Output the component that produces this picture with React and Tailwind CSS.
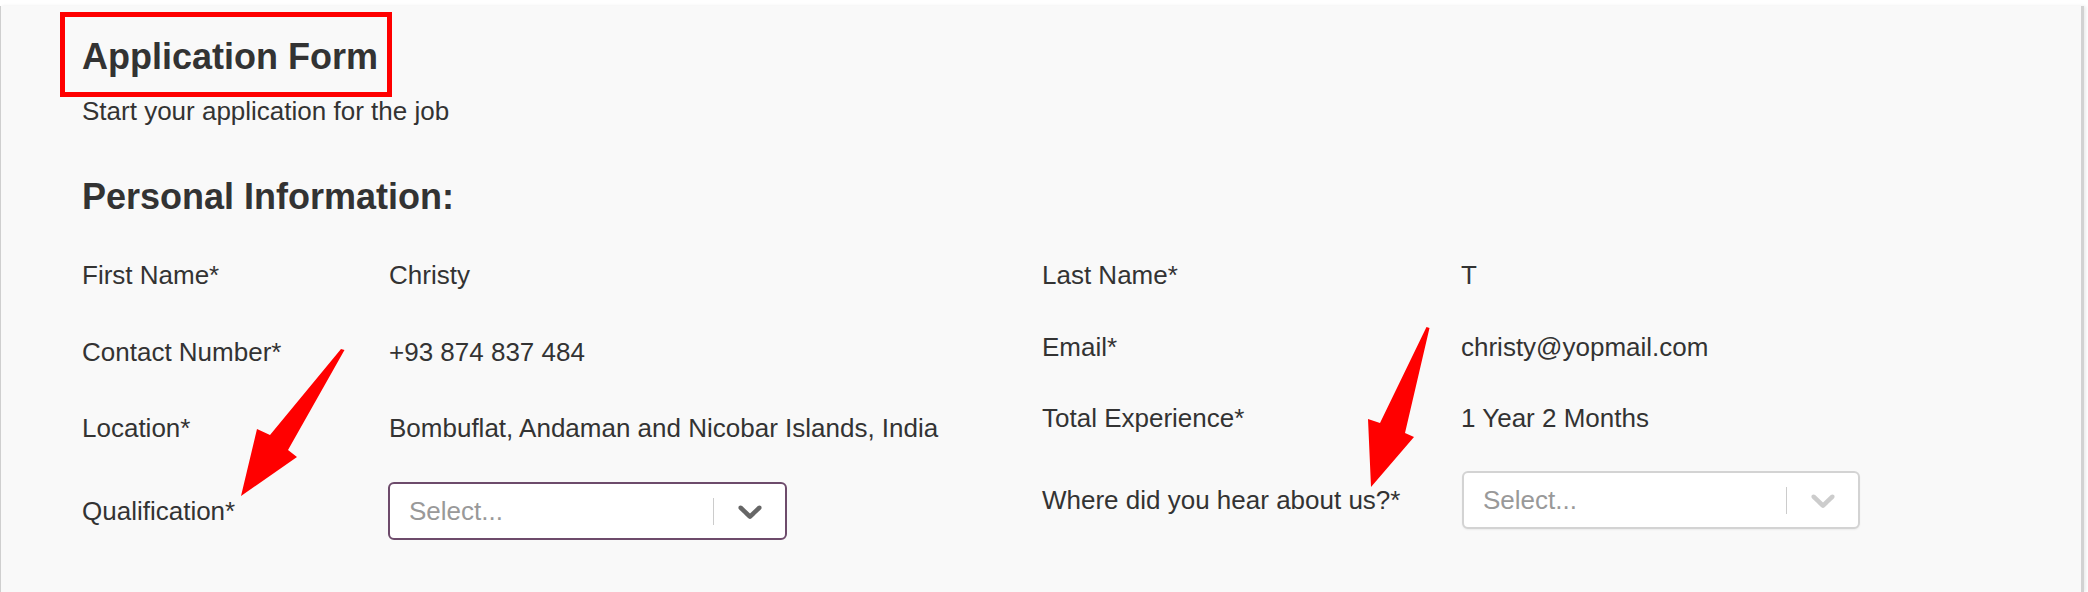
import React from 'react';

const LEFT_ROWS = [
  { label: 'First Name*', value: 'Christy', mt: 'mt-0' },
  { label: 'Contact Number*', value: '+93 874 837 484', mt: 'mt-[47px]' },
  { label: 'Location*', value: 'Bombuflat, Andaman and Nicobar Islands, India', mt: 'mt-[46px]' },
];

const RIGHT_ROWS = [
  { label: 'Last Name*', value: 'T', mt: 'mt-0' },
  { label: 'Email*', value: 'christy@yopmail.com', mt: 'mt-[42px]' },
  { label: 'Total Experience*', value: '1 Year 2 Months', mt: 'mt-[41px]' },
];

/**
 * react-select style dropdown (placeholder only)
 */
function SelectBox({ focused, width }) {
  return (
    <div
      className={`flex h-[58px] items-center rounded-[6px] border-2 bg-white ${width} ${
        focused ? 'border-[#6d4b6b]' : 'border-[#d3d3d3] shadow-[0_1px_2px_rgba(0,0,0,0.06)]'
      }`}
    >
      <div className="flex-1 pl-[19px] text-[26px] leading-[30px] text-[#999]">Select...</div>
      <span className="h-[27px] w-px bg-[#cccccc]" />
      <div className="pl-[16px] pr-[15px]">
        <svg
          width="40"
          height="40"
          viewBox="0 0 20 20"
          className={focused ? 'fill-[#666]' : 'fill-[#cccccc]'}
        >
          <path d="M4.516 7.548c0.436-0.446 1.043-0.481 1.576 0l3.908 3.747 3.908-3.747c0.533-0.481 1.141-0.446 1.574 0 0.436 0.445 0.408 1.197 0 1.615-0.406 0.418-4.695 4.502-4.695 4.502-0.217 0.223-0.502 0.335-0.787 0.335s-0.57-0.112-0.789-0.335c0 0-4.287-4.084-4.695-4.502s-0.436-1.17 0-1.615z" />
        </svg>
      </div>
    </div>
  );
}

function InfoRow({ label, value, mt, labelWidth }) {
  return (
    <div className={`flex h-[30px] items-center ${mt}`}>
      <div className={`${labelWidth} shrink-0`}>{label}</div>
      <div>{value}</div>
    </div>
  );
}

export default function App() {
  return (
    <div className="relative h-[592px] w-[2088px] overflow-hidden bg-white pr-[4px] pt-[6px] font-['Liberation_Sans',Arial,sans-serif] text-[#333]">
      <div className="h-full border-l border-[#cfcfcf] border-r-[3px] border-r-[#d2d2d2] bg-[#f9f9f9] pl-[81px] pt-[30px] shadow-[2px_0_3px_rgba(0,0,0,0.08)]">
        {/* Header */}
        <div className="relative">
          <h1 className="text-[36px] font-bold leading-[42px]">Application Form</h1>
          <div className="absolute -left-[22px] -top-[24px] h-[85px] w-[332px] border-[5px] border-[#ff0000]" />
        </div>
        <p className="mt-[18px] text-[26px] leading-[30px]">Start your application for the job</p>

        <h2 className="mt-[50px] text-[36px] font-bold leading-[42px]">Personal Information:</h2>

        {/* Fields */}
        <div className="mt-[42px] grid grid-cols-[960px_1fr] items-start text-[26px] leading-[30px]">
          <div className="flex flex-col">
            {LEFT_ROWS.map((row) => (
              <InfoRow key={row.label} {...row} labelWidth="w-[307px]" />
            ))}
            <div className="mt-[39px] flex items-center">
              <div className="w-[306px] shrink-0">Qualification*</div>
              <SelectBox focused width="w-[399px]" />
            </div>
          </div>
          <div className="flex flex-col">
            {RIGHT_ROWS.map((row) => (
              <InfoRow key={row.label} {...row} labelWidth="w-[419px]" />
            ))}
            <div className="mt-[38px] flex items-center">
              <div className="w-[420px] shrink-0">Where did you hear about us?*</div>
              <SelectBox width="w-[398px]" />
            </div>
          </div>
        </div>
      </div>

      {/* Annotation arrows */}
      <svg
        className="pointer-events-none absolute left-0 top-0"
        width="2088"
        height="592"
        viewBox="0 0 2088 592"
      >
        <polygon
          fill="#ff0000"
          points="341,349 270,435 257,429 241,496 297,457 288,450 344.5,350"
        />
        <polygon
          fill="#ff0000"
          points="1426.5,327 1380,423 1368,419 1371,487 1414,437 1405,433 1429.5,328"
        />
      </svg>
    </div>
  );
}
